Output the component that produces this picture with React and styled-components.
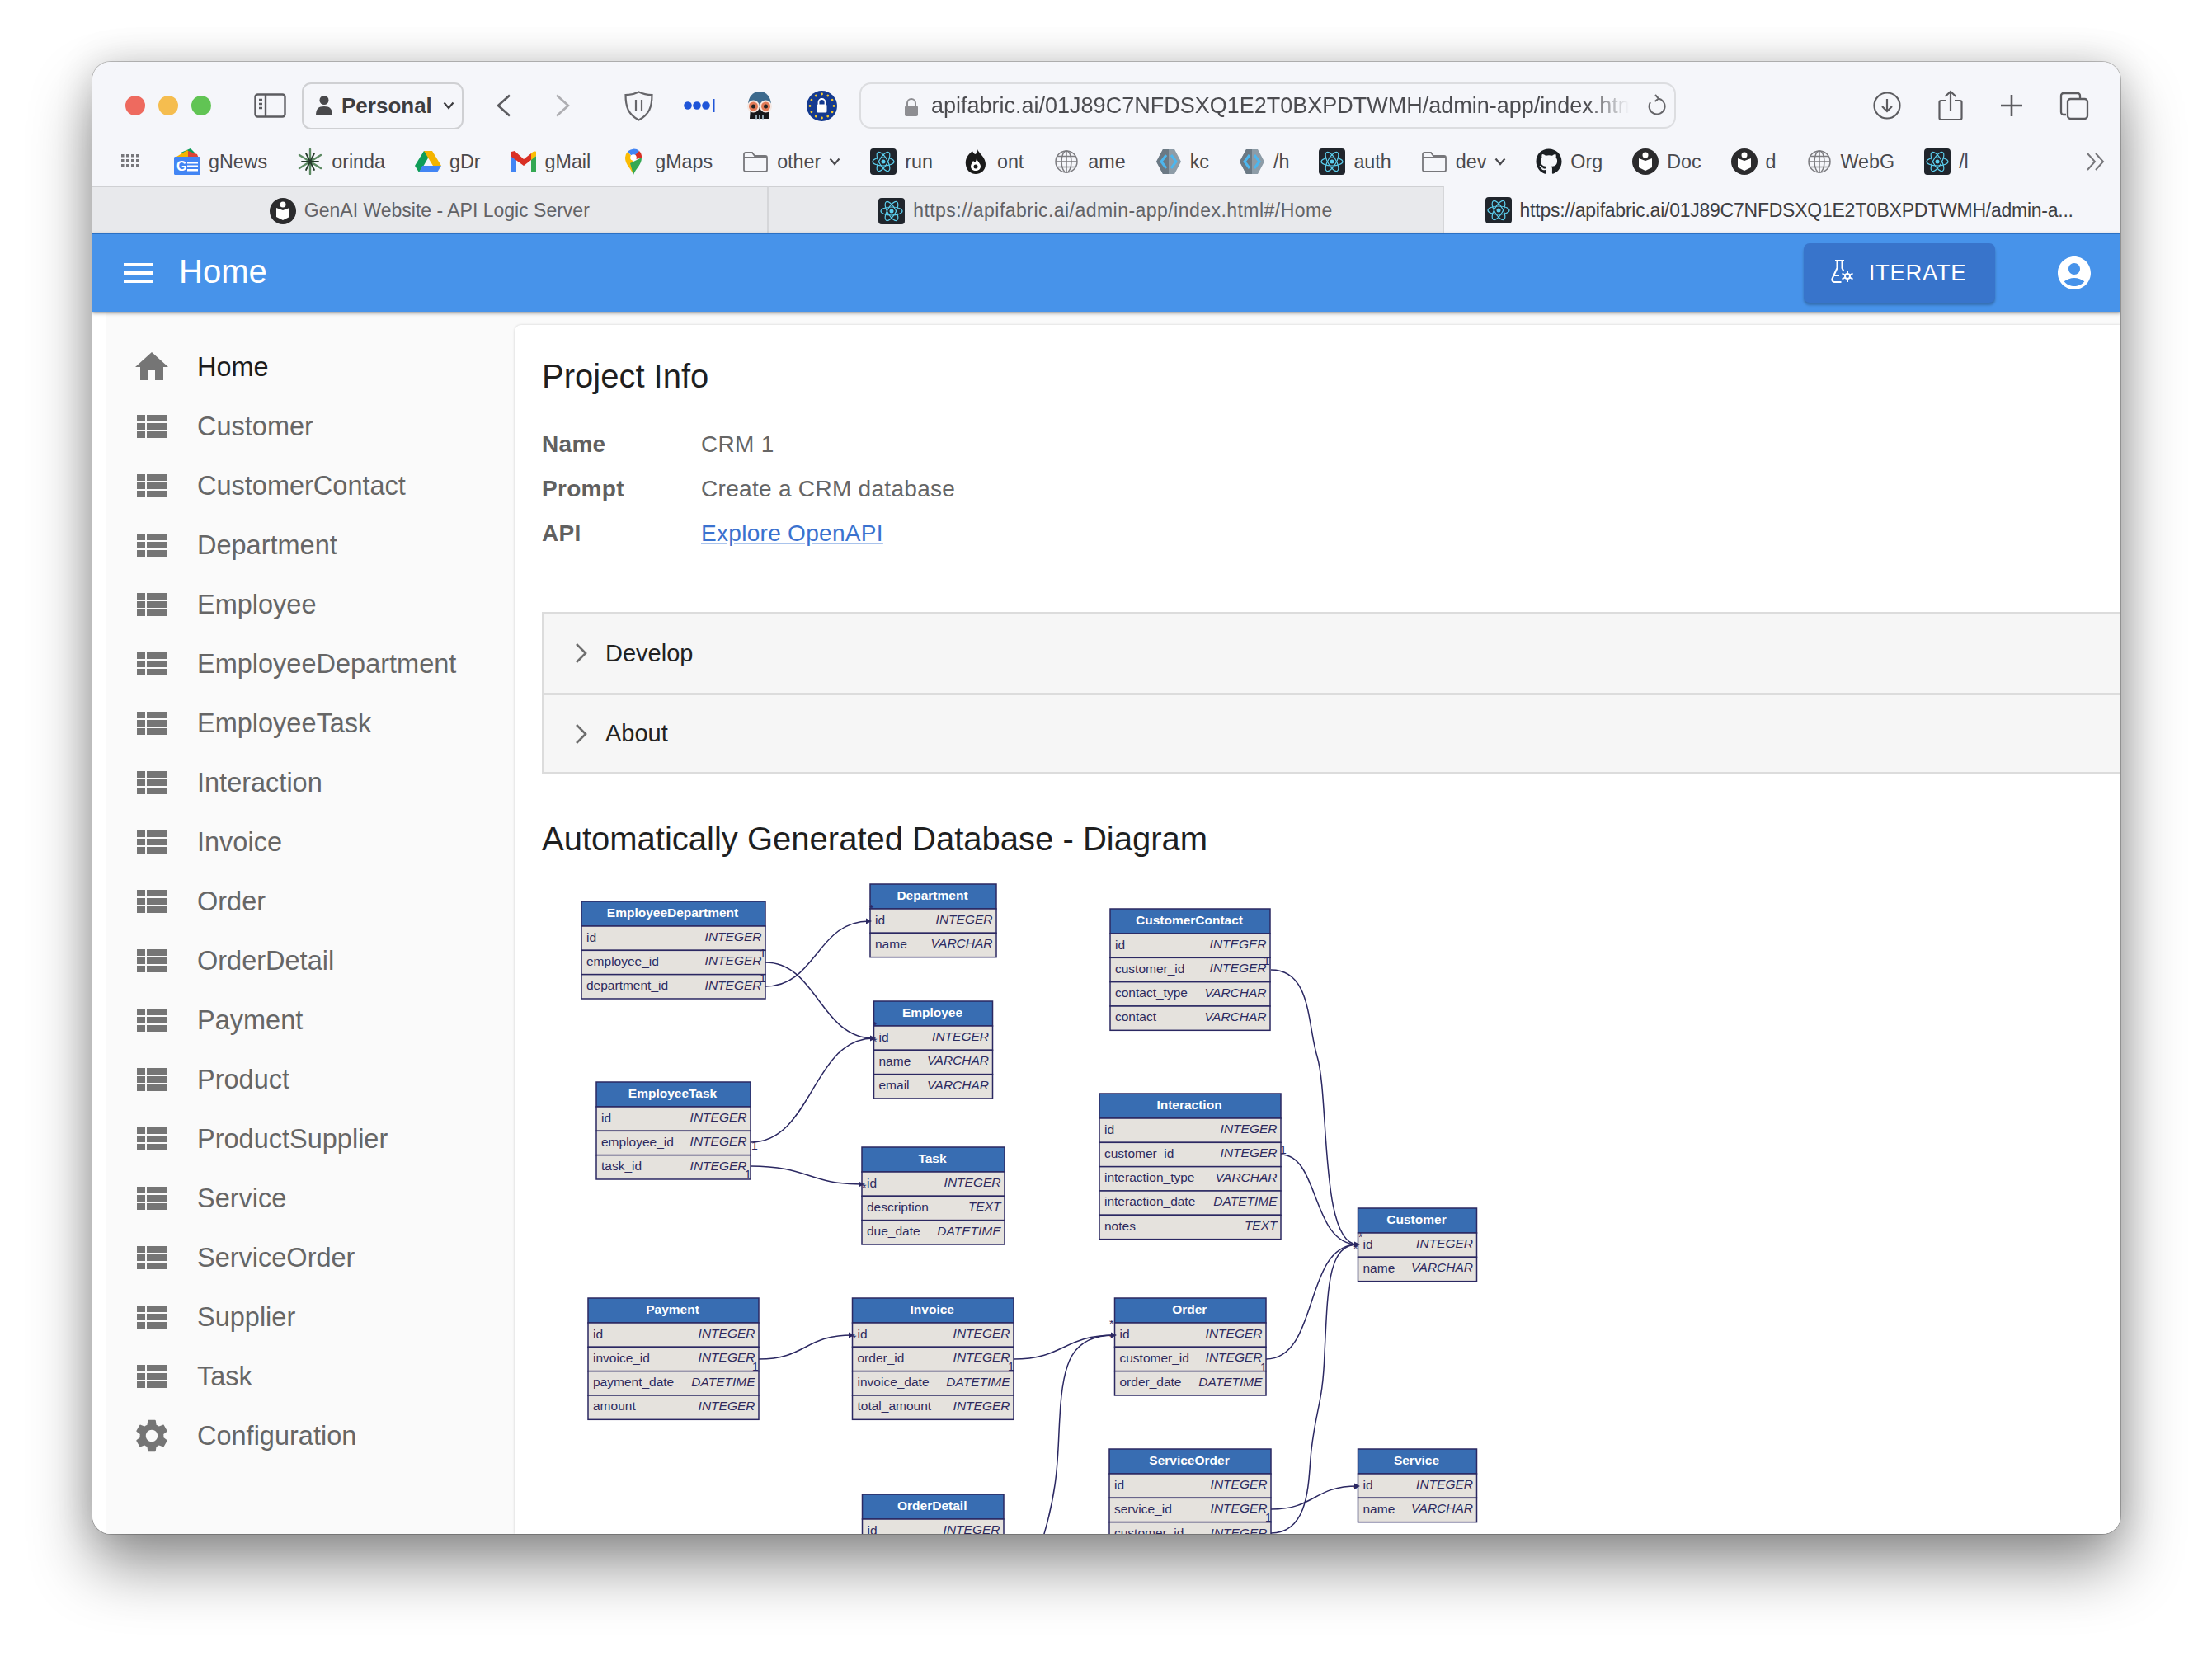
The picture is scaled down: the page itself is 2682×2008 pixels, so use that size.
import React from 'react'
import styled, { createGlobalStyle } from 'styled-components'
import { FaGithub } from 'react-icons/fa'

const sans = '"Liberation Sans", Arial, sans-serif'

const GlobalStyle = createGlobalStyle`
  html, body {
    margin: 0;
    background: #fff;
    font-family: ${sans};
  }
  #root {
    height: 2008px;
    overflow: hidden;
  }
`

const Desk = styled.div`
  padding: 75px 111px 0 112px;
`
const Window = styled.div`
  height: 1785px;
  border-radius: 22px;
  overflow: hidden;
  background: #fff;
  box-shadow: 0 0 0 1px rgba(0, 0, 0, .22), 0 40px 75px rgba(0, 0, 0, .42), 0 0 45px rgba(0, 0, 0, .16);
  display: flex;
  flex-direction: column;
`

/* browser chrome */
const Toolbar = styled.div`
  height: 106px;
  flex: none;
  display: flex;
  align-items: center;
  padding: 0 38px 0 40px;
  background: #f5f6fa;
  color: #5c5c60;
`
const Lights = styled.div`
  display: flex;
  gap: 16px;
  margin-right: 52px;
`
const Light = styled.span`
  width: 24px;
  height: 24px;
  border-radius: 50%;
  background: ${p => p.$color};
`
const ProfileButton = styled.div`
  width: 196px;
  height: 57px;
  box-sizing: border-box;
  margin: 0 40px 0 19px;
  padding: 0 10px 0 14px;
  display: flex;
  align-items: center;
  gap: 10px;
  border: 2px solid #cfd0d3;
  border-radius: 11px;
  font-size: 26px;
  font-weight: 700;
  color: #3d3d40;
`
const UrlBar = styled.div`
  width: 990px;
  height: 56px;
  box-sizing: border-box;
  margin-left: 27px;
  padding: 0 10px 0 85px;
  display: flex;
  align-items: center;
  gap: 21px;
  border: 2px solid #dcdde0;
  border-radius: 14px;
  position: relative;
  font-size: 27px;
  color: #4c4c50;
`
const UrlText = styled.span`
  width: 846px;
  flex: none;
  white-space: nowrap;
  -webkit-mask-image: linear-gradient(to right, #000 94%, transparent);
  mask-image: linear-gradient(to right, #000 94%, transparent);
`
const ToolIcons = styled.div`
  margin-left: auto;
  display: flex;
  align-items: center;
`
const Glyph = styled.svg`
  flex: none;
  display: block;
  margin-left: ${p => p.$ml || 0}px;
`
const LineGlyph = styled(Glyph).attrs({ fill: 'none', stroke: 'currentColor' })``

const Bookmarks = styled.div`
  height: 45px;
  box-sizing: border-box;
  flex: none;
  display: flex;
  align-items: center;
  gap: 36px;
  padding: 0 17px 15px 34px;
  background: #f5f6fa;
  font-size: 23.3px;
  color: #4a4a4e;
`
const Bookmark = styled.div`
  display: flex;
  align-items: center;
  gap: 10px;
  white-space: nowrap;
`
const MoreMark = styled.div`
  margin-left: auto;
  color: #77777b;
`
const Tabs = styled.div`
  height: 56px;
  flex: none;
  display: grid;
  grid-template-columns: repeat(3, 1fr);
  font-size: 23px;
`
const Tab = styled.div`
  display: flex;
  align-items: center;
  justify-content: center;
  gap: 10px;
  white-space: nowrap;
  box-sizing: border-box;
  padding: 2px ${p => (p.$active ? 8 : 0)}px 0 0;
  letter-spacing: ${p => p.$spacing || 0}px;
  background: ${p => (p.$active ? '#f5f6fa' : '#e8e9ec')};
  color: ${p => (p.$active ? '#3f3f43' : '#626266')};
  border-top: ${p => (p.$active ? 'none' : '1px solid #cfd0d3')};
  border-right: ${p => (p.$active ? 'none' : '2px solid #d5d6d9')};
`

/* app bar */
const AppBar = styled.header`
  height: 96px;
  flex: none;
  position: relative;
  z-index: 2;
  box-sizing: border-box;
  display: flex;
  align-items: center;
  padding: 0 32px;
  background: #4793ea;
  border-top: 2px solid #2a70c4;
  box-shadow: 0 2px 4px rgba(0, 0, 0, .35);
  color: #fff;
`
const Title = styled.h1`
  margin: 0 0 5px 25px;
  font-size: 40px;
  font-weight: 400;
  line-height: 48px;
`
const IterateButton = styled.button`
  width: 232px;
  height: 72px;
  margin-left: auto;
  padding: 0 2px 0 0;
  display: flex;
  align-items: center;
  justify-content: center;
  gap: 18px;
  border: 0;
  border-radius: 7px;
  background: #3874cb;
  box-shadow: 0 3px 3px rgba(0, 0, 0, .25);
  color: #fff;
  font-family: ${sans};
  font-size: 27.5px;
  letter-spacing: .6px;
`
const UserButton = styled.div`
  margin-left: 72px;
  display: flex;
`

/* admin layout */
const Main = styled.div`
  flex: 1;
  min-height: 0;
  display: flex;
  background: #fff;
`
const Sidebar = styled.nav`
  width: 496px;
  flex: none;
  margin-left: 16px;
  box-sizing: border-box;
  padding-top: 31px;
  background: #fafafa;
`
const NavItem = styled.div`
  height: 72px;
  display: flex;
  align-items: center;
  padding-left: 32px;
  font-size: 32.5px;
  color: ${p => (p.$active ? '#1c1c1c' : '#666')};
`
const NavIcon = styled.svg`
  width: 48px;
  height: 48px;
  flex: none;
  margin-right: 31px;
  fill: #757575;
`
const ContentArea = styled.div`
  flex: 1;
  min-width: 0;
  background: #fafafa;
  padding-top: 16px;
`
const Card = styled.main`
  height: 100%;
  box-sizing: border-box;
  padding: 38px 0 0 33px;
  background: #fff;
  border-top-left-radius: 8px;
  box-shadow: 0 0 3px rgba(0, 0, 0, .18);
`
const SectionTitle = styled.h2`
  margin: 0;
  font-size: 40px;
  font-weight: 400;
  line-height: 48px;
  color: #1f1f1f;
`
const InfoList = styled.dl`
  margin: 32px 0 68px;
  display: grid;
  grid-template-columns: 193px 1fr;
  grid-auto-rows: 54px;
  align-items: center;
  font-size: 28px;
  letter-spacing: .3px;
  color: #666;
`
const InfoLabel = styled.dt`
  font-weight: 700;
  color: #606060;
`
const InfoValue = styled.dd`
  margin: 0;
`
const DocLink = styled.a`
  color: #3a72cf;
  text-decoration-color: #a9c3ec;
`
const Accordion = styled.div`
  margin-bottom: 54px;
  border: solid #dcdcdc;
  border-width: 2px 0 3px 3px;
  background: #f6f6f6;
`
const AccordionRow = styled.div`
  height: ${p => p.$h}px;
  box-sizing: border-box;
  display: flex;
  align-items: center;
  gap: 21px;
  padding-left: 36px;
  font-size: 29px;
  color: #222;
  border-top: ${p => (p.$divider ? '3px solid #dcdcdc' : 'none')};
`
const DiagramSvg = styled.svg`
  display: block;
  width: 1200px;
  height: 850px;
  font-family: ${sans};
  font-size: 15.5px;
`

/* browser icons */
const SidebarToggle = () => (
  <LineGlyph width="39" height="30" viewBox="0 0 39 30" strokeWidth="2.4" $ml="0">
    <rect x="1.5" y="1.5" width="36" height="27" rx="3" />
    <path d="M14 2v26M6 8h4M6 13h4M6 18h4" />
  </LineGlyph>
)
const PersonIcon = () => (
  <Glyph width="22" height="26" viewBox="0 0 22 26" fill="#48484b">
    <circle cx="11" cy="6.5" r="5.5" />
    <path d="M1 25c0-8 3-11 10-11s10 3 10 11z" />
  </Glyph>
)
const ChevronSmall = ({ ml = 0 }) => (
  <LineGlyph width="14" height="10" viewBox="0 0 14 10" strokeWidth="2.2" $ml={ml}>
    <path d="M1.5 1.5 7 8l5.5-6.5" />
  </LineGlyph>
)
const Back = ({ color, ml }) => (
  <LineGlyph width="18" height="28" viewBox="0 0 18 28" strokeWidth="2.8" style={{ color }} $ml={ml}>
    <path d={ml ? 'M2 1.5 16 14 2 26.5' : 'M16 1.5 2 14l14 12.5'} />
  </LineGlyph>
)
const ShieldIcon = () => (
  <LineGlyph width="37" height="37" viewBox="0 0 37 37" strokeWidth="2.2" $ml="65" style={{ color: '#66666a' }}>
    <path d="M18.5 1.5c5 2.5 10 3.5 16 3.5 0 14-3 24-16 30.5C5.500 29 2.500 19 2.500 5c6 0 11-1 16-3.500z" />
    <path d="M15 11v13M22 11v13" />
  </LineGlyph>
)
const PasswordDots = () => (
  <Glyph width="38" height="16" viewBox="0 0 38 16" $ml="36" fill="#1f55d8">
    <circle cx="5" cy="8" r="4.800" />
    <circle cx="16" cy="8" r="4.800" />
    <circle cx="27" cy="8" r="4.800" />
    <rect x="35.500" width="2" height="16" />
  </Glyph>
)
const SkullAvatar = () => (
  <Glyph width="36" height="36" viewBox="0 0 36 36" $ml="36">
    <path d="M4 18C4 7 10 1 18 1s14 6 14 17v4H4z" fill="#3d6a8d" />
    <path d="M7 20h22l1 14H6z" fill="#15181c" />
    <circle cx="10.500" cy="19" r="6.500" fill="#e27a56" stroke="#f5e6df" strokeWidth="2" />
    <circle cx="25.500" cy="19" r="6.500" fill="#e27a56" stroke="#f5e6df" strokeWidth="2" />
    <circle cx="10.500" cy="19" r="2.500" fill="#222" />
    <circle cx="25.500" cy="19" r="2.500" fill="#222" />
    <path d="M14 30v5M18 30v5M22 30v5" stroke="#b9d0de" strokeWidth="1.500" />
  </Glyph>
)
const EuLock = () => {
  const stars = Array.from({ length: 12 }, (_, i) => i * 30)
  return (
    <Glyph width="37" height="37" viewBox="0 0 37 37" $ml="39">
      <circle cx="18.500" cy="18.500" r="18.500" fill="#143a8f" />
      {stars.map(a => (
        <circle key={a} cx="18.500" cy="4" r="1.400" fill="#f5c92c" transform={`rotate(${a} 18.500 18.500)`} />
      ))}
      <path d="M14.500 17v-3a4 4 0 0 1 8 0v3" fill="none" stroke="#fff" strokeWidth="1.800" />
      <rect x="12.500" y="16.500" width="12" height="10" rx="1.500" fill="#fff" />
    </Glyph>
  )
}
const LockIcon = styled.svg`
  position: absolute;
  left: 52px;
  top: 16px;
`
const Reload = () => (
  <LineGlyph width="24" height="28" viewBox="0 0 24 28" strokeWidth="2" style={{ color: '#66666a' }}>
    <path d="M14 5.500A9.500 9.500 0 1 1 5 10M11 1l4 4.500L10.500 9" />
  </LineGlyph>
)
const DownloadIcon = () => (
  <LineGlyph width="34" height="34" viewBox="0 0 34 34" strokeWidth="2.200">
    <circle cx="17" cy="17" r="15.500" />
    <path d="M17 9v15M11 18l6 6 6-6" />
  </LineGlyph>
)
const ShareIcon = () => (
  <LineGlyph width="30" height="38" viewBox="0 0 30 38" strokeWidth="2.200" $ml="45">
    <path d="M10 13H3.500a2 2 0 0 0-2 2v19a2 2 0 0 0 2 2h23a2 2 0 0 0 2-2V15a2 2 0 0 0-2-2H20" />
    <path d="M15 25V2M8.500 8 15 2l6.500 6" />
  </LineGlyph>
)
const PlusIcon = () => (
  <LineGlyph width="28" height="28" viewBox="0 0 28 28" strokeWidth="2.600" $ml="45">
    <path d="M14 1v26M1 14h26" />
  </LineGlyph>
)
const TabsIcon = () => (
  <LineGlyph width="36" height="35" viewBox="0 0 36 35" strokeWidth="2.300" $ml="44">
    <path d="M8 28H5a3 3 0 0 1-3-3V5a3 3 0 0 1 3-3h17a3 3 0 0 1 3 3v3" />
    <rect x="10" y="9" width="24" height="24" rx="3.500" />
  </LineGlyph>
)

/* bookmark favicons, all in a 32 box */
const Fav = ({ children }) => (
  <Glyph width="32" height="32" viewBox="0 0 32 32">{children}</Glyph>
)
const ReactFav = () => (
  <Fav>
    <rect width="32" height="32" rx="4" fill="#20252c" />
    <g fill="none" stroke="#5ccfee" strokeWidth="1.200">
      <ellipse cx="16" cy="16" rx="13" ry="5" />
      <ellipse cx="16" cy="16" rx="13" ry="5" transform="rotate(60 16 16)" />
      <ellipse cx="16" cy="16" rx="13" ry="5" transform="rotate(120 16 16)" />
    </g>
    <circle cx="16" cy="16" r="2.500" fill="#5ccfee" />
  </Fav>
)
const NewsFav = () => (
  <Fav>
    <path d="M6 6 20 0l6 6z" fill="#0f9d58" />
    <path d="M3 10 16 2l8 8z" fill="#f4b400" />
    <path d="M17 3 28 7l2 5H17z" fill="#db4437" />
    <rect y="10" width="32" height="22" rx="1.500" fill="#4285f4" />
    <text x="3" y="27" fontSize="16" fontWeight="700" fill="#fff">G</text>
    <path d="M16 16h13v2.500H16zM16 20.500h13V23H16zM16 25h13v2.500H16z" fill="#fff" />
  </Fav>
)
const OrindaFav = () => (
  <Fav>
    <g stroke="#5c8a62" strokeWidth="2.400" strokeLinecap="round">
      <path d="M16 1v30M3 8l26 16M3 24 29 8" />
    </g>
    <g stroke="#24382a" strokeWidth="1.800" strokeLinecap="round">
      <path d="M11 6l10 20M21 6 11 26M6 16h20" />
    </g>
  </Fav>
)
const DriveFav = () => (
  <Fav>
    <path d="M11 3h10L10 22 5 29 0 21z" fill="#0f9d58" />
    <path d="M21 3l11 18H22L11 3z" fill="#f4b400" />
    <path d="M9 21h23l-5 8H5z" fill="#4285f4" />
  </Fav>
)
const GmailFav = () => (
  <Fav>
    <path d="M1 9v19h6V13z" fill="#4285f4" />
    <path d="M25 13v15h6V9z" fill="#34a853" />
    <path d="M1 4v6l15 11 9-7V6l-9 7L5 3z" fill="#d93025" />
    <path d="M25 6v8l6-5V4c0-1-4-1-6 2z" fill="#fbbc04" />
  </Fav>
)
const MapsFav = () => (
  <Fav>
    <path d="M16 32C13 24 6 20 6 11a10 10 0 0 1 3-7l7 8z" fill="#fbbc04" />
    <path d="M9 4A10 10 0 0 1 23 3l-7 8z" fill="#4285f4" />
    <path d="M23 3a10 10 0 0 1 3 8l-10 3-1-3z" fill="#d93025" />
    <path d="M16 32c3-8 10-12 10-21l-14 7z" fill="#34a853" />
    <circle cx="16" cy="11" r="3.800" fill="#fff" />
  </Fav>
)
const FolderFav = () => (
  <Fav>
    <path d="M2 7a2 2 0 0 1 2-2h8l3 4h13a2 2 0 0 1 2 2v15a2 2 0 0 1-2 2H4a2 2 0 0 1-2-2z" fill="none" stroke="#77777b" strokeWidth="1.800" />
    <path d="M2 11h28" stroke="#77777b" strokeWidth="1.800" />
  </Fav>
)
const GlobeFav = () => (
  <Fav>
    <g fill="none" stroke="#7c7c80" strokeWidth="1.500">
      <circle cx="16" cy="16" r="13" />
      <ellipse cx="16" cy="16" rx="6" ry="13" />
      <path d="M16 3v26M3 16h26M5 9.500h22M5 22.500h22" />
    </g>
  </Fav>
)
const FlameFav = () => (
  <Fav>
    <path d="M18 1c1 5-3 6-3 6S12 4 12 3C6 8 3 13 4 20c1 7 6 11 12 11s12-4 12-12C28 11 21 7 18 1z" fill="#1a1a1a" />
    <path d="M17 12c1 4 5 6 5 10 0 3-3 5-6 5s-6-2-6-5c0-3 2-5 3-7l2 2c1-1 2-3 2-5z" fill="#fff" />
    <circle cx="16" cy="22" r="2.500" fill="#1a1a1a" />
  </Fav>
)
const HexFav = () => (
  <Fav>
    <path d="M9 1h14l8 15-8 15H9L1 16z" fill="#8d9ca7" />
    <path d="M9 1h7v30H9L1 16z" fill="#6b7984" />
    <path d="M13 8 7 16l6 8M19 8l6 8-6 8" fill="none" stroke="#4cb6ee" strokeWidth="3" />
  </Fav>
)
const GithubFav = () => (
  <Fav>
    <FaGithub size={32} color="#1b1f23" />
  </Fav>
)
const DocFav = () => (
  <Fav>
    <circle cx="16" cy="16" r="16" fill="#2b2b2d" />
    <circle cx="16" cy="8" r="3.500" fill="#fff" />
    <path d="M8 12l8 3 8-3v11l-8 4-8-4z" fill="#fff" />
  </Fav>
)
const GridIcon = () => (
  <Glyph width="24" height="32" viewBox="0 0 24 24" fill="#77777b" style={{ marginRight: 5 }}>
    {[3, 9, 15].flatMap(y => [1, 7, 13, 19].map(x => <rect key={`${x}-${y}`} x={x} y={y} width="3.500" height="3.500" />))}
  </Glyph>
)

const bookmarks = [
  [NewsFav, 'gNews'],
  [OrindaFav, 'orinda'],
  [DriveFav, 'gDr'],
  [GmailFav, 'gMail'],
  [MapsFav, 'gMaps'],
  [FolderFav, 'other', true],
  [ReactFav, 'run'],
  [FlameFav, 'ont'],
  [GlobeFav, 'ame'],
  [HexFav, 'kc'],
  [HexFav, '/h'],
  [ReactFav, 'auth'],
  [FolderFav, 'dev', true],
  [GithubFav, 'Org'],
  [DocFav, 'Doc'],
  [DocFav, 'd'],
  [GlobeFav, 'WebG'],
  [ReactFav, '/l']
]

const FlaskIcon = () => (
  <LineGlyph width="28" height="30" viewBox="0 0 28 30" strokeWidth="2" style={{ marginTop: -4 }}>
    <path d="M5 2h11M7.500 2v9L1.500 24a3 3 0 0 0 3 4h8M13.500 2v9l2 4M4 20h6" />
    <circle cx="20" cy="21" r="3" />
    <path d="M20 14v4M20 24v4M13.500 17.500l3.500 2M23 22.500l3.500 2M13.500 24.500l3.500-2M23 19.500l3.500-2" />
  </LineGlyph>
)

const homePath = 'M10 20v-6h4v6h5v-8h3L12 3 2 12h3v8z'
const listPath = 'M3 14h5v-4H3v4zm0 5h5v-4H3v4zM3 9h5V5H3v4zm6 5h12v-4H9v4zm0 5h12v-4H9v4zM9 5v4h12V5H9z'
const gearPath = 'M19.14 12.94c.04-.3.06-.61.06-.94 0-.32-.02-.64-.07-.94l2.03-1.58c.18-.14.23-.41.12-.61l-1.92-3.32c-.12-.22-.37-.29-.59-.22l-2.39.96c-.5-.38-1.03-.7-1.62-.94l-.36-2.54c-.04-.24-.24-.41-.48-.41h-3.84c-.24 0-.43.17-.47.41l-.36 2.54c-.59.24-1.13.57-1.62.94l-2.39-.96c-.22-.08-.47 0-.59.22L2.74 8.87c-.12.21-.08.47.12.61l2.03 1.58c-.05.3-.09.63-.09.94s.02.64.07.94l-2.03 1.58c-.18.14-.23.41-.12.61l1.92 3.32c.12.22.37.29.59.22l2.39-.96c.5.38 1.03.7 1.62.94l.36 2.54c.05.24.24.41.48.41h3.84c.24 0 .44-.17.47-.41l.36-2.54c.59-.24 1.13-.56 1.62-.94l2.39.96c.22.08.47 0 .59-.22l1.92-3.32c.12-.22.07-.47-.12-.61l-2.01-1.58zM12 15.6c-1.98 0-3.6-1.62-3.6-3.6s1.62-3.6 3.6-3.6 3.6 1.62 3.6 3.6-1.62 3.6-3.6 3.6z'
const userPath = 'M12 2C6.48 2 2 6.48 2 12s4.48 10 10 10 10-4.48 10-10S17.52 2 12 2zm0 4c1.93 0 3.5 1.57 3.5 3.5S13.93 13 12 13s-3.5-1.57-3.5-3.5S10.07 6 12 6zm0 14c-2.03 0-4.43-.82-6.14-2.88C7.55 15.8 9.68 15 12 15s4.45.8 6.14 2.12C16.43 19.18 14.03 20 12 20z'

const navItems = [
  'Customer', 'CustomerContact', 'Department', 'Employee', 'EmployeeDepartment', 'EmployeeTask',
  'Interaction', 'Invoice', 'Order', 'OrderDetail', 'Payment', 'Product', 'ProductSupplier',
  'Service', 'ServiceOrder', 'Supplier', 'Task'
]

/* er diagram, coordinates are page pixels (see viewBox) */
const HEAD = 30
const ROW = 29.33
const tables = [
  { name: 'EmployeeDepartment', x: 705, y: 1092, w: 223, rows: [['id', 'INTEGER'], ['employee_id', 'INTEGER'], ['department_id', 'INTEGER']] },
  { name: 'Department', x: 1055, y: 1071, w: 153, rows: [['id', 'INTEGER'], ['name', 'VARCHAR']] },
  { name: 'Employee', x: 1059.500, y: 1213, w: 144, rows: [['id', 'INTEGER'], ['name', 'VARCHAR'], ['email', 'VARCHAR']] },
  { name: 'EmployeeTask', x: 723, y: 1311, w: 187, rows: [['id', 'INTEGER'], ['employee_id', 'INTEGER'], ['task_id', 'INTEGER']] },
  { name: 'Task', x: 1045, y: 1390, w: 173, rows: [['id', 'INTEGER'], ['description', 'TEXT'], ['due_date', 'DATETIME']] },
  { name: 'CustomerContact', x: 1346, y: 1101, w: 194, rows: [['id', 'INTEGER'], ['customer_id', 'INTEGER'], ['contact_type', 'VARCHAR'], ['contact', 'VARCHAR']] },
  { name: 'Interaction', x: 1333, y: 1325, w: 220, rows: [['id', 'INTEGER'], ['customer_id', 'INTEGER'], ['interaction_type', 'VARCHAR'], ['interaction_date', 'DATETIME'], ['notes', 'TEXT']] },
  { name: 'Customer', x: 1646.500, y: 1464, w: 144, rows: [['id', 'INTEGER'], ['name', 'VARCHAR']] },
  { name: 'Payment', x: 713, y: 1573, w: 207, rows: [['id', 'INTEGER'], ['invoice_id', 'INTEGER'], ['payment_date', 'DATETIME'], ['amount', 'INTEGER']] },
  { name: 'Invoice', x: 1033.500, y: 1573, w: 195.500, rows: [['id', 'INTEGER'], ['order_id', 'INTEGER'], ['invoice_date', 'DATETIME'], ['total_amount', 'INTEGER']] },
  { name: 'Order', x: 1351.500, y: 1573, w: 183.500, rows: [['id', 'INTEGER'], ['customer_id', 'INTEGER'], ['order_date', 'DATETIME']] },
  { name: 'OrderDetail', x: 1045.500, y: 1811, w: 171.500, rows: [['id', 'INTEGER'], ['order_id', 'INTEGER']] },
  { name: 'ServiceOrder', x: 1345, y: 1756, w: 196, rows: [['id', 'INTEGER'], ['service_id', 'INTEGER'], ['customer_id', 'INTEGER'], ['date', 'DATETIME']] },
  { name: 'Service', x: 1646.500, y: 1756, w: 144, rows: [['id', 'INTEGER'], ['name', 'VARCHAR']] }
]
const links = [
  'M928 1166C990 1166 995 1258 1059 1258',
  'M928 1195C990 1195 990 1116 1054 1116',
  'M910 1384C985 1384 985 1258 1059 1258',
  'M910 1413C980 1413 980 1435 1045 1435',
  'M1541 1175C1590 1175 1585 1240 1597 1280C1612 1330 1600 1508 1646 1508',
  'M1553 1399C1600 1399 1590 1508 1646 1508',
  'M1535 1647C1600 1647 1580 1508 1646 1508',
  'M1541 1858C1590 1858 1586 1790 1590 1757C1596 1705 1604 1700 1606 1640C1610 1560 1610 1508 1646 1508',
  'M1541 1829C1595 1829 1592 1801 1646 1801',
  'M920 1647C978 1647 975 1618 1033 1618',
  'M1229 1647C1290 1647 1290 1618 1351 1618',
  'M1262 1872C1285 1800 1282 1760 1285 1717C1288 1650 1300 1618 1351 1618'
]
const arrowTips = [[1057, 1116], [1062, 1258], [1048, 1435], [1649, 1508], [1036, 1618], [1354, 1618], [1649, 1801]]
const cardinalities = [
  ['1', 921, 1160], ['1', 921, 1190], ['1', 911, 1393], ['1', 903, 1428], ['1', 1532, 1169],
  ['1', 1552, 1398], ['1', 1528, 1662], ['1', 1534, 1844], ['1', 912, 1661], ['1', 1222, 1661],
  ['*', 1054, 1106], ['*', 1058, 1248], ['*', 1058, 1267], ['*', 1045, 1444], ['*', 1647, 1504],
  ['*', 1641, 1518], ['*', 1345, 1609], ['*', 1345, 1627], ['*', 1641, 1810], ['*', 1033, 1627]
]

const HeadBox = styled.rect`
  fill: #386db2;
  stroke: #2b2862;
  stroke-width: 1.500;
`
const RowBox = styled.rect`
  fill: #e5e2dd;
  stroke: #2b2862;
  stroke-width: 1.500;
`
const HeadLabel = styled.text`
  fill: #fff;
  font-weight: 700;
  text-anchor: middle;
`
const ColumnName = styled.text`
  fill: #2e2b5e;
`
const ColumnType = styled.text`
  fill: #2e2b5e;
  font-style: italic;
  text-anchor: end;
`
const LinkPath = styled.path`
  fill: none;
  stroke: #2b2862;
  stroke-width: 1.500;
`
const Arrow = styled.polygon`
  fill: #2b2862;
`
const Cardinality = styled.text`
  fill: #2b2862;
  font-size: 14px;
`

const DbTable = ({ name, x, y, w, rows }) => (
  <g>
    <HeadBox x={x} y={y} width={w} height={HEAD} />
    <HeadLabel x={x + w / 2 - 1} y={y + 19}>{name}</HeadLabel>
    {rows.map(([col, type], i) => {
      const top = y + HEAD + i * ROW
      return (
        <g key={col}>
          <RowBox x={x} y={top} width={w} height={ROW} />
          <ColumnName x={x + 6} y={top + 18.500}>{col}</ColumnName>
          <ColumnType x={x + w - 4.500} y={top + 18}>{type}</ColumnType>
        </g>
      )
    })}
  </g>
)

const Diagram = () => (
  <DiagramSvg viewBox="657 1040 1200 850">
    {tables.map(t => <DbTable key={t.name} {...t} />)}
    {links.map(d => <LinkPath key={d} d={d} />)}
    {arrowTips.map(([x, y]) => (
      <Arrow key={`${x}-${y}`} points={`${x - 7},${y - 3.500} ${x},${y} ${x - 7},${y + 3.500}`} />
    ))}
    {cardinalities.map(([c, x, y]) => (
      <Cardinality key={`${x}-${y}`} x={x} y={y}>{c}</Cardinality>
    ))}
  </DiagramSvg>
)

const App = () => (
  <>
    <GlobalStyle />
    <Desk>
      <Window>
        <Toolbar>
          <Lights>
            <Light $color="#ee6a5f" />
            <Light $color="#f5bd4f" />
            <Light $color="#61c454" />
          </Lights>
          <SidebarToggle />
          <ProfileButton>
            <PersonIcon />
            Personal
            <ChevronSmall ml="3" />
          </ProfileButton>
          <Back />
          <Back color="#aeaeb2" ml="53" />
          <ShieldIcon />
          <PasswordDots />
          <SkullAvatar />
          <EuLock />
          <UrlBar>
            <LockIcon width="18" height="24" viewBox="0 0 18 24">
              <path d="M4 11V7a5 5 0 0 1 10 0v4" fill="none" stroke="#8e8e92" strokeWidth="2" />
              <rect x="1" y="10" width="16" height="13" rx="2" fill="#8e8e92" />
            </LockIcon>
            <UrlText>apifabric.ai/01J89C7NFDSXQ1E2T0BXPDTWMH/admin-app/index.htm</UrlText>
            <Reload />
          </UrlBar>
          <ToolIcons>
            <DownloadIcon />
            <ShareIcon />
            <PlusIcon />
            <TabsIcon />
          </ToolIcons>
        </Toolbar>
        <Bookmarks>
          <GridIcon />
          {bookmarks.map(([Icon, label, folder]) => (
            <Bookmark key={label}>
              <Icon />
              {label}
              {folder && <ChevronSmall />}
            </Bookmark>
          ))}
          <MoreMark>
            <LineGlyph width="26" height="24" viewBox="0 0 26 24" strokeWidth="2">
              <path d="M3 2l9 10-9 10M13 2l9 10-9 10" />
            </LineGlyph>
          </MoreMark>
        </Bookmarks>
        <Tabs>
          <Tab><DocFav />GenAI Website - API Logic Server</Tab>
          <Tab $spacing=".46"><ReactFav />https://apifabric.ai/admin-app/index.html#/Home</Tab>
          <Tab $active $spacing="-.24"><ReactFav />https://apifabric.ai/01J89C7NFDSXQ1E2T0BXPDTWMH/admin-a...</Tab>
        </Tabs>
        <AppBar>
          <svg width="48" height="48" viewBox="0 0 24 24" fill="#fff">
            <path d="M3 18h18v-2H3v2zm0-5h18v-2H3v2zm0-7v2h18V6H3z" />
          </svg>
          <Title>Home</Title>
          <IterateButton>
            <FlaskIcon />
            ITERATE
          </IterateButton>
          <UserButton>
            <svg width="48" height="48" viewBox="0 0 24 24" fill="#fff"><path d={userPath} /></svg>
          </UserButton>
        </AppBar>
        <Main>
          <Sidebar>
            <NavItem $active>
              <NavIcon viewBox="0 0 24 24"><path d={homePath} /></NavIcon>
              Home
            </NavItem>
            {navItems.map(item => (
              <NavItem key={item}>
                <NavIcon viewBox="0 0 24 24"><path d={listPath} /></NavIcon>
                {item}
              </NavItem>
            ))}
            <NavItem>
              <NavIcon viewBox="0 0 24 24"><path d={gearPath} /></NavIcon>
              Configuration
            </NavItem>
          </Sidebar>
          <ContentArea>
            <Card>
              <SectionTitle>Project Info</SectionTitle>
              <InfoList>
                <InfoLabel>Name</InfoLabel>
                <InfoValue>CRM 1</InfoValue>
                <InfoLabel>Prompt</InfoLabel>
                <InfoValue>Create a CRM database</InfoValue>
                <InfoLabel>API</InfoLabel>
                <InfoValue><DocLink href="#">Explore OpenAPI</DocLink></InfoValue>
              </InfoList>
              <Accordion>
                <AccordionRow $h={96}>
                  <LineGlyph width="17" height="26" viewBox="0 0 17 26" strokeWidth="2.600" style={{ color: '#6e6e6e' }}>
                    <path d="M3 2l11 11L3 24" />
                  </LineGlyph>
                  Develop
                </AccordionRow>
                <AccordionRow $h={96} $divider>
                  <LineGlyph width="17" height="26" viewBox="0 0 17 26" strokeWidth="2.600" style={{ color: '#6e6e6e' }}>
                    <path d="M3 2l11 11L3 24" />
                  </LineGlyph>
                  About
                </AccordionRow>
              </Accordion>
              <SectionTitle>Automatically Generated Database - Diagram</SectionTitle>
              <Diagram />
            </Card>
          </ContentArea>
        </Main>
      </Window>
    </Desk>
  </>
)

export default App
